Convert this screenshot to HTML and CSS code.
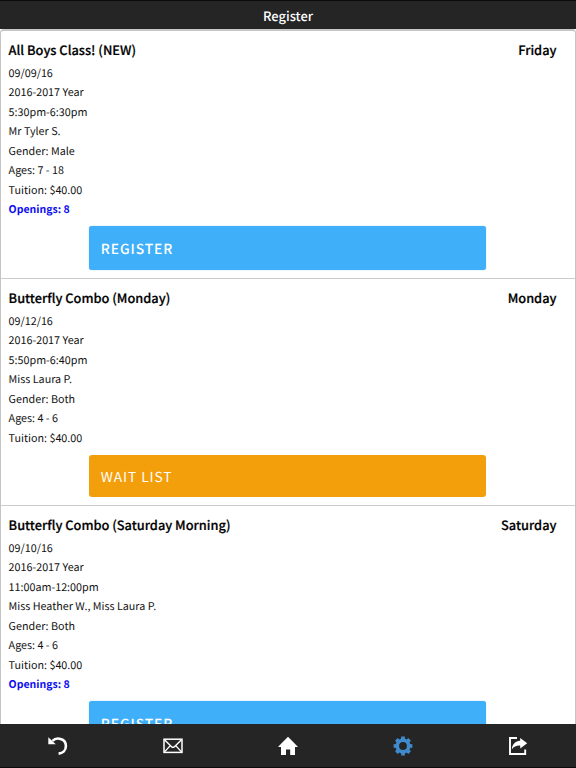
FILE: index.html
```
<!DOCTYPE html>
<html lang="en">
<head>
    <meta charset="utf-8">
    <meta name="viewport" content="width=device-width, initial-scale=1.0">
    <title>Register</title>
    <link rel="stylesheet" href="styles.css">
</head>
<body>
    <header class="header">
        <h1>Register</h1>
    </header>

    <main class="content">
        <ul class="class-list">
            <li class="class-item">
                <div class="class-title">
                    <h2>All Boys Class! (NEW)</h2>
                    <span class="day">Friday</span>
                </div>
                <p>09/09/16</p>
                <p>2016-2017 Year</p>
                <p>5:30pm-6:30pm</p>
                <p>Mr Tyler S.</p>
                <p>Gender: Male</p>
                <p>Ages: 7 - 18</p>
                <p>Tuition: $40.00</p>
                <p class="openings">Openings: 8</p>
                <button class="btn btn-register">REGISTER</button>
            </li>
            <li class="class-item">
                <div class="class-title">
                    <h2>Butterfly Combo (Monday)</h2>
                    <span class="day">Monday</span>
                </div>
                <p>09/12/16</p>
                <p>2016-2017 Year</p>
                <p>5:50pm-6:40pm</p>
                <p>Miss Laura P.</p>
                <p>Gender: Both</p>
                <p>Ages: 4 - 6</p>
                <p>Tuition: $40.00</p>
                <button class="btn btn-wait">WAIT LIST</button>
            </li>
            <li class="class-item">
                <div class="class-title">
                    <h2>Butterfly Combo (Saturday Morning)</h2>
                    <span class="day">Saturday</span>
                </div>
                <p>09/10/16</p>
                <p>2016-2017 Year</p>
                <p>11:00am-12:00pm</p>
                <p>Miss Heather W., Miss Laura P.</p>
                <p>Gender: Both</p>
                <p>Ages: 4 - 6</p>
                <p>Tuition: $40.00</p>
                <p class="openings">Openings: 8</p>
                <button class="btn btn-register">REGISTER</button>
            </li>
        </ul>
    </main>

    <nav class="footer">
        <a class="tab">
            <svg width="22" height="22" viewBox="0 0 22 22">
                <path d="M5.5 5.8C9 2.2 18.9 2.6 18.9 11C18.9 15.4 15.8 18.3 11.6 18.6" fill="none" stroke="currentColor" stroke-width="2.6"/>
                <path d="M1.3 2.2L1.3 9.3L8.8 9.3Z" fill="currentColor"/>
            </svg>
        </a>
        <a class="tab">
            <svg width="22" height="22" viewBox="0 0 22 22" fill="none" stroke="currentColor">
                <rect x="2" y="4.2" width="18" height="13.2" stroke-width="1.5"/>
                <path d="M2.5 4.8L9.8 11.9Q11 12.8 12.2 11.9L19.5 4.8M2.5 16.9L8.3 10.6M19.5 16.9L13.7 10.6" stroke-width="1.4"/>
            </svg>
        </a>
        <a class="tab">
            <svg width="22" height="22" viewBox="0 0 22 22" fill="currentColor">
                <path d="M11 1.8L20.6 11.4V12H18V20H13.2V14.4H9V20H4V12H1.4V11.4Z"/>
            </svg>
        </a>
        <a class="tab active">
            <svg width="22" height="22" viewBox="0 0 22 22">
                <circle cx="11" cy="11" r="5.7" fill="none" stroke="currentColor" stroke-width="3.6"/>
                <g fill="currentColor">
                    <path id="teeth" d="M9.2 1.6H12.8L13.1 5H8.9ZM9.2 20.4H12.8L13.1 17H8.9ZM1.6 9.2V12.8L5 13.1V8.9ZM20.4 9.2V12.8L17 13.1V8.9Z"/>
                    <use href="#teeth" transform="rotate(45 11 11)"/>
                </g>
            </svg>
        </a>
        <a class="tab">
            <svg width="22" height="22" viewBox="0 0 22 22">
                <path d="M10 3H3V19H18.2V14.6" fill="none" stroke="currentColor" stroke-width="1.9"/>
                <path d="M13.2 3L20.2 8.3L13.2 13.4V10.6C9.6 10.4 7 11.4 4.8 14.4C5.3 9.2 8.4 6.2 13.2 5.8Z" fill="currentColor"/>
            </svg>
        </a>
    </nav>
</body>
</html>
```

FILE: styles.css
```
* {
    box-sizing: border-box;
}

body {
    margin: 0;
    height: 100vh;
    display: flex;
    flex-direction: column;
    overflow: hidden;
    background-color: #fff;
    color: #111;
    font-family: "Noto Sans CJK SC", "Noto Sans", sans-serif;
    text-rendering: geometricPrecision;
}

.header {
    flex: none;
    height: 29px;
    padding-top: 2px;
    border-top: 1px solid #0c0c0c;
    background-color: #252525;
    color: #fff;
}

.header h1 {
    margin: 0;
    font-size: 12.9px;
    font-weight: 500;
    line-height: 25px;
    text-align: center;
}

.content {
    flex: 1;
    min-height: 0;
    overflow: hidden;
}

.class-list {
    list-style: none;
    margin: 0;
    padding: 0;
    border: 1px solid #c4c4c4;
    border-top: 2px solid #c8c6c6;
    border-radius: 4px;
}

.class-item {
    padding: 8px 18.5px 8px 7.6px;
    border-bottom: 1px solid #ccc;
}

.class-title {
    display: flex;
    justify-content: space-between;
    height: 24.6px;
    color: #000;
    font-size: 12.8px;
    font-weight: 500;
    line-height: 22px;
    -webkit-text-stroke: 0.2px #000;
}

.class-title h2 {
    margin: 0;
    font-size: inherit;
    font-weight: inherit;
}

.class-item p {
    margin: 0;
    font-size: 10.75px;
    line-height: 19.5px;
}

.class-item .openings {
    color: #0c0cee;
    font-size: 10.5px;
    font-weight: 700;
}

.btn {
    display: block;
    width: 397px;
    height: 42px;
    margin: 6.7px 0 0 80.8px;
    padding: 0 0 0 11.4px;
    border: 0;
    border-radius: 3px;
    color: #fff;
    font-family: inherit;
    font-size: 13.8px;
    letter-spacing: 0.9px;
    text-align: left;
    text-rendering: inherit;
}

.btn-register {
    height: 44px;
    background-color: #40aff9;
    box-shadow: 0 0 1px #40aff9;
    font-weight: 500;
}

.btn-wait {
    background-color: #f39e0b;
    font-weight: 400;
}

.footer {
    flex: none;
    display: flex;
    height: 44px;
    border-bottom: 1px solid #0c0c0c;
    background-color: #252525;
}

.tab {
    flex: 1;
    display: flex;
    align-items: center;
    justify-content: center;
    color: #fff;
}

.tab.active {
    color: #3f8bce;
}
```
